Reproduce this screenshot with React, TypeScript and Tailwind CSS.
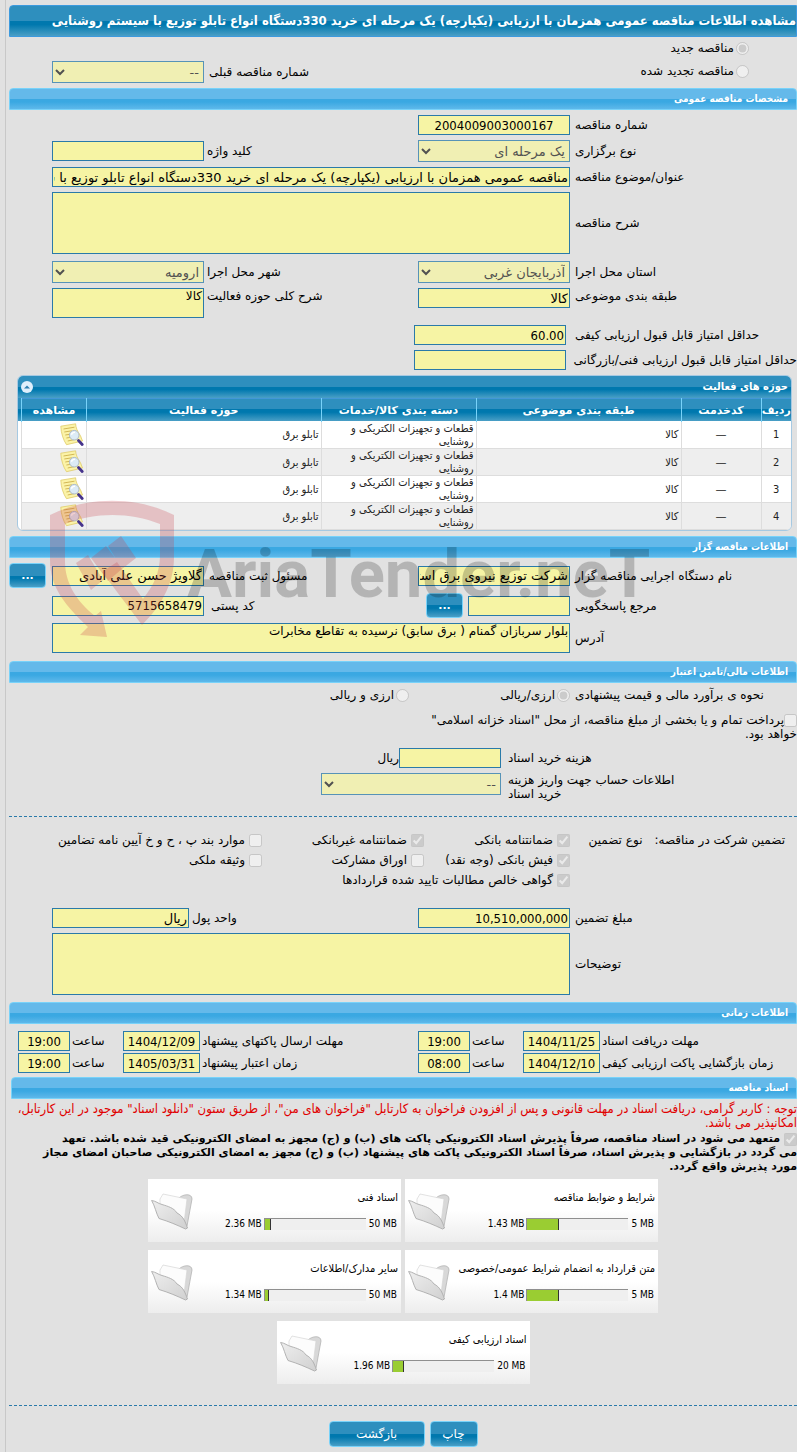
import React from "react";

const FIELD =
  "block h-5 w-full min-w-0 rounded-none border border-[#2a7aa9] bg-[#f6f4a4] px-px text-[13px] leading-4 text-black outline-none";
const DIGITS = "font-['DejaVu_Sans_Condensed','DejaVu_Sans',sans-serif]";
const AREA =
  "block w-full resize-none rounded-none border border-[#2a7aa9] bg-[#f6f4a4] px-px text-xs leading-[14px] text-black outline-none";
const PAIR =
  "grid grid-cols-[minmax(0,227fr)_minmax(0,152fr)_minmax(0,214fr)_minmax(0,152fr)_minmax(0,43fr)] items-center";
const BLUE =
  "bg-[linear-gradient(#2e8fbe_0%,#2e8fbe_50%,#0078ae_50%,#0078ae_62%,#4a9fc6_100%)]";
const CHECK = "m-0 size-[13px] shrink-0";

function Section({ title, inset = false }: { title: string; inset?: boolean }) {
  return (
    <h2
      className={`flex h-[22px] items-center rounded-t border border-[#78d2f9] bg-[linear-gradient(#64b9ea_0%,#64b9ea_50%,#3aa8e2_50%,#3aa8e2_65%,#5eb8ea_100%)] pr-2 text-[10px] font-bold text-white ${DIGITS} ${
        inset ? "ml-[2px]" : ""
      }`}
    >
      {title}
    </h2>
  );
}

function Label({
  id,
  text,
  className = "pl-[3px]",
}: {
  id: string;
  text: React.ReactNode;
  className?: string;
}) {
  return (
    <label htmlFor={id} className={`block whitespace-nowrap text-left leading-4 ${className}`}>
      {text}
    </label>
  );
}

function Text({ id, value = "", className = "" }: { id: string; value?: string; className?: string }) {
  const numeric = /^[\d.,:/]+$/.test(value);
  return (
    <input
      id={id}
      type="text"
      readOnly
      value={value}
      className={`${FIELD} ${numeric ? DIGITS : ""} ${className}`}
    />
  );
}

function Drop({ id, value }: { id: string; value: string }) {
  return (
    <select
      id={id}
      disabled
      className="block h-[22px] w-full rounded-none border border-[#2a7aa9] bg-[#f6f4a4] text-[13px] text-[#222] opacity-75"
    >
      <option>{value}</option>
    </select>
  );
}

function Dots({ label }: { label: string }) {
  return (
    <button
      type="button"
      aria-label={label}
      className={`flex h-[25px] w-[37px] shrink-0 items-center justify-center rounded border border-[#78d2f9] text-[11px] font-bold text-white ${BLUE}`}
    >
      ...
    </button>
  );
}

function Option({
  id,
  text,
  type = "checkbox",
  checked = false,
}: {
  id: string;
  text: string;
  type?: "checkbox" | "radio";
  checked?: boolean;
}) {
  return (
    <div className={`flex items-center whitespace-nowrap ${type === "radio" ? "gap-[2px]" : "gap-1"}`}>
      <input id={id} type={type} disabled defaultChecked={checked} className={CHECK} />
      <label htmlFor={id}>{text}</label>
    </div>
  );
}

function NoteIcon() {
  return (
    <svg viewBox="0 0 24 24" className="size-6" aria-hidden="true">
      <path d="M.8 3.2 15.6.8c.2 4 1.800 7.400 4.900 12l2 5.200-16 3.700C3.300 17 1 10 .8 3.200Z" fill="#fbf3a8" stroke="#e0cc6a" strokeWidth=".8" />
      <path d="m3.500 6 11-1.800M4.300 9l7.500-1.200M5.300 12l5-.8M6.400 15l5-.8M7.700 18l7-1.500" stroke="#cdb04c" strokeWidth=".9" fill="none" />
      <path d="m18.500 17.500 3.700 4" stroke="#46348c" strokeWidth="2.800" strokeLinecap="round" />
      <circle cx="14.200" cy="12.200" r="4.800" fill="#dcebf6" stroke="#aebccb" strokeWidth="1" />
      <path d="M11.400 11.700c.5-1.900 2-2.500 3.600-2.300" stroke="#fff" strokeWidth="1.400" fill="none" />
    </svg>
  );
}

function FolderIcon() {
  return (
    <svg viewBox="0 0 42 38" className="h-[38px] w-[42px]" aria-hidden="true">
      <defs>
        <linearGradient id="front" x1="0" y1="0" x2="1" y2="1">
          <stop offset="0" stopColor="#eeeeee" />
          <stop offset="1" stopColor="#d0d0d0" />
        </linearGradient>
      </defs>
      <path d="M28 6c4-4 13-5 13 1l-5 27-2 2-8-10Z" fill="#d8d8d8" stroke="#b4b4b4" strokeWidth=".8" />
      <path d="M9 14V7l3-5 24 5-3 24L9 22Z" fill="#fcfcfc" stroke="#d6d6d6" strokeWidth=".7" />
      <path
        d="M.6 8.500C5 9 7 11.500 11 12.500c6 1.800 12 3.500 15 8.500 6 3 8 8 10.500 15l-2 1C26 33 18 29.500 8 26.500 5 21 4 14 .6 8.500Z"
        fill="url(#front)"
        stroke="#ababab"
        strokeWidth=".9"
      />
    </svg>
  );
}

function DocCard({ title, used, total, share }: { title: string; used: string; total: string; share: number }) {
  return (
    <div
      dir="ltr"
      className={`flex h-[63px] w-[253px] items-center bg-[linear-gradient(#fff_0%,#fff_50%,#ededed_100%)] px-[3px] leading-[14px] ${DIGITS}`}
    >
      <FolderIcon />
      <div className="flex flex-1 flex-col gap-3">
        <div dir="rtl" className="text-[11px]">
          {title}
        </div>
        <div className="flex items-center justify-end gap-[2px] pr-px text-[10px]">
          <span>{used}</span>
          <div className="h-3 w-[102px] border-t border-l border-[#8f8f8f] bg-[#efefef]">
            <div className="h-full border-r border-[#333] bg-[#9acd32]" style={{ width: `${share}%` }} />
          </div>
          <span className="pl-px">{total}</span>
        </div>
      </div>
    </div>
  );
}

function Watermark() {
  return (
    <div aria-hidden="true" className="pointer-events-none absolute top-[125px] left-[41px] flex items-start" dir="ltr">
      <svg viewBox="50 80 125 140" className="h-[140px] w-[125px]" fill="#c83c46" fillOpacity=".25">
        <path d="M50 95C88 76 136 76 174 95v42c0 28-14 50-32 68l-40-53 15-10 26 37c11-14 17-27 17-44v-31c-30-12-65-12-95 0v38c0 21 12 40 30 54l6-5 6 26-27-2 8-8C66 186 50 168 50 140Z" />
        <path d="m76 143 12-8 15 25-12 10ZM91 138l15-12 17 22-15 13ZM108 126l13-10 15 22-14 11Z" />
      </svg>
      <span className="pt-9 pl-3 font-['Roboto',sans-serif] text-[67px] leading-[76px] font-bold text-black/20">
        AriaTender.neT
      </span>
    </div>
  );
}

const COLUMNS = ["ردیف", "کدخدمت", "طبقه بندی موضوعی", "دسته بندی کالا/خدمات", "حوزه فعالیت", "مشاهده"];

function ActivityTable() {
  const td = "border-b border-l border-[#ddd] px-[2px]";
  return (
    <div className="mr-[5px] ml-2 overflow-hidden rounded-md border border-[#a6c9e2] bg-white">
      <div className={`flex h-[22px] items-center justify-between px-[3px] text-[11px] font-bold text-white ${DIGITS} ${BLUE}`}>
        <span>حوزه های فعالیت</span>
        <button type="button" aria-label="بستن جدول" className="flex size-3 items-center justify-center rounded-full bg-[#dfeffc]">
          <svg viewBox="0 0 12 12" className="size-3">
            <path d="M3 7.500 6 4.500l3 3Z" fill="#2e7fb0" />
          </svg>
        </button>
      </div>
      <div className={`bg-[length:100%_23px] bg-no-repeat pl-[3px] ${BLUE}`}>
        <table className="w-full table-fixed border-collapse text-[11px] leading-[13px] text-[#222]">
          <colgroup>
            <col className="w-[30px]" />
            <col className="w-20" />
            <col className="w-[205px]" />
            <col className="w-[155px]" />
            <col />
            <col className="w-[65px]" />
          </colgroup>
          <thead>
            <tr className="h-[23px] text-white">
              {COLUMNS.map((c) => (
                <th key={c} className="border-t border-l border-t-[#4297d7] border-l-[#78d2f9] p-0 text-center font-bold whitespace-nowrap">
                  {c}
                </th>
              ))}
            </tr>
          </thead>
          <tbody className={DIGITS}>
            {[1, 2, 3, 4].map((n) => (
              <tr key={n} className="h-[27px] odd:bg-white even:bg-[#eee]">
                <td className={`${td} text-center`}>{n}</td>
                <td className={`${td} text-center font-['DejaVu_Sans']`}>—</td>
                <td className={td}>کالا</td>
                <td className={td}>
                  قطعات و تجهیزات الکتریکی و
                  <br />
                  روشنایی
                </td>
                <td className={td}>تابلو برق</td>
                <td className={td}>
                  <NoteIcon />
                </td>
              </tr>
            ))}
          </tbody>
        </table>
      </div>
    </div>
  );
}

const TIMES = [
  ["مهلت دریافت اسناد", "1404/11/25", "19:00", "مهلت ارسال پاکتهای پیشنهاد", "1404/12/09", "19:00"],
  ["زمان بازگشایی پاکت ارزیابی کیفی", "1404/12/10", "08:00", "زمان اعتبار پیشنهاد", "1405/03/31", "19:00"],
];

const DOCS = [
  { title: "شرایط و ضوابط مناقصه", used: "1.43 MB", total: "5 MB", share: 31 },
  { title: "اسناد فنی", used: "2.36 MB", total: "50 MB", share: 6 },
  { title: "متن قرارداد به انضمام شرایط عمومی/خصوصی", used: "1.4 MB", total: "5 MB", share: 31 },
  { title: "سایر مدارک/اطلاعات", used: "1.34 MB", total: "50 MB", share: 4 },
  { title: "اسناد ارزیابی کیفی", used: "1.96 MB", total: "20 MB", share: 11 },
];

const SUBJECT = "مناقصه عمومی همزمان با ارزیابی (یکپارچه) یک مرحله ای خرید 330دستگاه انواع تابلو توزیع با سیستم روشنایی";

export default function App() {
  return (
    <div
      dir="rtl"
      className="overflow-hidden bg-[#e1e1e1] pl-[5px] font-['DejaVu_Sans',sans-serif] text-xs leading-[14px] text-black"
    >
      <main className="border-l border-[#c8c8c8] pt-[5px] pb-[5px] pl-[3px]">
        <h1 className={`flex h-8 items-center rounded-tl border border-[#3c9ade] text-[13px] font-bold whitespace-nowrap text-white ${DIGITS} ${BLUE}`}>
          مشاهده اطلاعات {SUBJECT}
        </h1>

        <div className="grid grid-cols-[minmax(0,379fr)_minmax(0,214fr)_minmax(0,152fr)_minmax(0,43fr)] items-end pt-1 pb-[5px]">
          <div className="flex flex-col gap-[9px] pr-12 pb-[5px]">
            <Option id="new" type="radio" text="مناقصه جدید" checked />
            <Option id="renewed" type="radio" text="مناقصه تجدید شده" />
          </div>
          <Label id="prev" text="شماره مناقصه قبلی" className="pb-[3px] pl-[5px]" />
          <Drop id="prev" value="--" />
        </div>

        <Section title="مشخصات مناقصه عمومی" />
        <div className="flex flex-col gap-[5px] py-[5px]">
          <div className={PAIR}>
            <Label id="number" text="شماره مناقصه" className="pl-[5px]" />
            <Text id="number" value="2004009003000167" className="text-center" />
          </div>
          <div className={PAIR}>
            <Label id="kind" text="نوع برگزاری" className="pl-[5px]" />
            <Drop id="kind" value="یک مرحله ای" />
            <Label id="keyword" text="کلید واژه" />
            <Text id="keyword" />
          </div>
          <div className={PAIR}>
            <Label id="subject" text="عنوان/موضوع مناقصه" className="pl-[5px]" />
            <div className="col-span-3">
              <Text id="subject" value={SUBJECT} />
            </div>
          </div>
          <div className={PAIR}>
            <Label id="desc" text="شرح مناقصه" className="pl-[5px]" />
            <textarea id="desc" readOnly className={`${AREA} col-span-3 h-[62px]`} />
          </div>
          <div className={`${PAIR} pt-[2px]`}>
            <Label id="province" text="استان محل اجرا" className="pl-[5px]" />
            <Drop id="province" value="آذربایجان غربی" />
            <Label id="city" text="شهر محل اجرا" />
            <Drop id="city" value="ارومیه" />
          </div>
          <div className={`${PAIR} items-start`}>
            <Label id="class" text="طبقه بندی موضوعی" className="pl-[5px]" />
            <Text id="class" value="کالا" />
            <Label id="scope" text="شرح کلی حوزه فعالیت" />
            <textarea id="scope" readOnly value="کالا" className={`${AREA} h-[30px]`} />
          </div>
          <div className="grid grid-cols-[minmax(0,231fr)_minmax(0,152fr)_minmax(0,405fr)] items-center gap-y-[5px] pt-[2px]">
            <Label id="quality" text="حداقل امتیاز قابل قبول ارزیابی کیفی" className="pl-[9px]" />
            <Text id="quality" value="60.00" />
            <span />
            <Label id="technical" text="حداقل امتیاز قابل قبول ارزیابی فنی/بازرگانی" className="pl-[9px]" />
            <Text id="technical" />
          </div>
        </div>

        <div className="relative">
          <ActivityTable />
          <div className="pt-[5px]">
            <Section title="اطلاعات مناقصه گزار" />
          </div>
          <div className="flex flex-col gap-[5px] pt-[5px] pb-2">
            <div className={PAIR}>
              <Label id="org" text="نام دستگاه اجرایی مناقصه گزار" className="pl-[5px]" />
              <Text id="org" value="شرکت توزیع نیروی برق استان آذربایجان غربی" />
              <Label id="officer" text="مسئول ثبت مناقصه" className="pl-[5px]" />
              <Text id="officer" value="گلاویژ حسن علی آبادی" />
              <div className="flex justify-end">
                <Dots label="انتخاب مسئول ثبت مناقصه" />
              </div>
            </div>
            <div className={PAIR}>
              <Label id="contact" text="مرجع پاسخگویی" className="pl-[5px]" />
              <div className="flex items-center gap-[5px] pl-2">
                <Text id="contact" className="flex-1" />
                <Dots label="انتخاب مرجع پاسخگویی" />
              </div>
              <Label id="postal" text="کد پستی" className="pl-[7px]" />
              <Text id="postal" value="5715658479" />
            </div>
            <div className={PAIR}>
              <Label id="address" text="آدرس" className="pl-[5px]" />
              <textarea
                id="address"
                readOnly
                value="بلوار سربازان گمنام ( برق سابق) نرسیده به تقاطع مخابرات"
                className={`${AREA} col-span-3 h-[30px]`}
              />
            </div>
          </div>
          <Watermark />
        </div>

        <Section title="اطلاعات مالی/تامین اعتبار" />
        <div className="grid grid-cols-[minmax(0,227fr)_minmax(0,161fr)_minmax(0,400fr)] items-center pt-1">
          <span className="pl-[5px] text-left leading-4 whitespace-nowrap">نحوه ی برآورد مالی و قیمت پیشنهادی</span>
          <Option id="fx-or" type="radio" text="ارزی/ریالی" checked />
          <Option id="fx-and" type="radio" text="ارزی و ریالی" />
        </div>
        <div className="pt-[10px] pb-[7px]">
          <input id="treasury" type="checkbox" disabled className="m-0 size-[13px] align-bottom" />
          <label htmlFor="treasury">
            پرداخت تمام و یا بخشی از مبلغ مناقصه، از محل "اسناد خزانه اسلامی"
            <br />
            خواهد بود.
          </label>
        </div>
        <div className="grid grid-cols-[minmax(0,296fr)_minmax(0,180fr)_minmax(0,312fr)] items-start gap-y-[5px] pb-[15px]">
          <Label id="cost" text="هزینه خرید اسناد" className="pt-[2px] pl-[7px]" />
          <div className="flex items-center">
            <Text id="cost" className="max-w-[102px]" />
            <span>ریال</span>
          </div>
          <span />
          <label htmlFor="account" className="pl-[7px] text-left whitespace-nowrap">
            <span className="inline-block text-right">
              اطلاعات حساب جهت واریز هزینه
              <br />
              <span className="block text-left">خرید اسناد</span>
            </span>
          </label>
          <Drop id="account" value="--" />
        </div>

        <div className="grid grid-cols-[minmax(0,227fr)_minmax(0,146fr)_minmax(0,162fr)_minmax(0,253fr)] border-t border-dashed border-[#2a7aa9] pt-[13px]">
          <div className="flex h-5 items-center gap-3 pr-3 whitespace-nowrap">
            <span>تضمین شرکت در مناقصه:</span>
            <span>نوع تضمین</span>
          </div>
          <div className="flex flex-col gap-[6px] pt-[3px]">
            <Option id="g1" text="ضمانتنامه بانکی" checked />
            <Option id="g2" text="فیش بانکی (وجه نقد)" checked />
            <Option id="g3" text="گواهی خالص مطالبات تایید شده قراردادها" checked />
          </div>
          <div className="flex flex-col gap-[6px] pt-[3px]">
            <Option id="g4" text="ضمانتنامه غیربانکی" checked />
            <Option id="g5" text="اوراق مشارکت" />
          </div>
          <div className="flex flex-col gap-[6px] pt-[3px]">
            <Option id="g6" text="موارد بند پ ، ح و خ آیین نامه تضامین" />
            <Option id="g7" text="وثیقه ملکی" />
          </div>
        </div>

        <div className="flex flex-col gap-[5px] pt-[21px] pb-[7px]">
          <div className="grid grid-cols-[minmax(0,227fr)_minmax(0,152fr)_minmax(0,229fr)_minmax(0,137fr)_minmax(0,43fr)] items-center">
            <Label id="amount" text="مبلغ تضمین" className="pl-[5px]" />
            <Text id="amount" value="10,510,000,000" />
            <Label id="unit" text="واحد پول" />
            <Text id="unit" value="ریال" />
          </div>
          <div className={PAIR}>
            <Label id="notes" text="توضیحات" className="pl-[5px]" />
            <textarea id="notes" readOnly className={`${AREA} col-span-3 h-[62px]`} />
          </div>
        </div>

        <Section title="اطلاعات زمانی" />
        <div className="flex flex-col gap-[2px] pt-[7px] pb-1">
          {TIMES.map(([a, date, hour, b, date2, hour2], i) => (
            <div
              key={a}
              className="grid grid-cols-[minmax(0,197fr)_minmax(0,77fr)_minmax(0,53fr)_minmax(0,52fr)_minmax(0,218fr)_minmax(0,77fr)_minmax(0,53fr)_minmax(0,52fr)_minmax(0,9fr)] items-center"
            >
              <Label id={`d1-${i}`} text={a} className="pl-[2px]" />
              <Text id={`d1-${i}`} value={date} className="text-center" />
              <Label id={`h1-${i}`} text="ساعت" className="pl-[2px]" />
              <Text id={`h1-${i}`} value={hour} className="text-center" />
              <Label id={`d2-${i}`} text={b} className="pl-[2px]" />
              <Text id={`d2-${i}`} value={date2} className="text-center" />
              <Label id={`h2-${i}`} text="ساعت" className="pl-[2px]" />
              <Text id={`h2-${i}`} value={hour2} className="text-center" />
            </div>
          ))}
        </div>

        <Section title="اسناد مناقصه" inset />
        <p className={`pt-[3px] text-[13px] leading-[14px] text-[#e00000] ${DIGITS}`}>
          توجه : کاربر گرامی، دریافت اسناد در مهلت قانونی و پس از افزودن فراخوان به کارتابل "فراخوان های من"، از طریق ستون "دانلود اسناد" موجود در این کارتابل،
          <br />
          امکانپذیر می باشد.
        </p>
        <div className="pt-[2px] pb-[5px] text-[11px] leading-[14px] font-bold">
          <input id="commit" type="checkbox" disabled defaultChecked className="m-0 ml-1 size-[13px] align-bottom" />
          <label htmlFor="commit">
            متعهد می شود در اسناد مناقصه، صرفاً پذیرش اسناد الکترونیکی پاکت های (ب) و (ج) مجهز به امضای الکترونیکی قید شده باشد. تعهد
            <br />
            می گردد در بازگشایی و پذیرش اسناد، صرفاً اسناد الکترونیکی پاکت های پیشنهاد (ب) و (ج) مجهز به امضای الکترونیکی صاحبان امضای مجاز
            <br />
            مورد پذیرش واقع گردد.
          </label>
        </div>

        <div className="mx-auto flex max-w-[512px] flex-wrap justify-center gap-x-1 gap-y-2 pb-[21px]">
          {DOCS.map((d) => (
            <DocCard key={d.title} {...d} />
          ))}
        </div>

        <div className="flex justify-center gap-[5px] border-t border-dashed border-[#2a7aa9] pt-[15px]">
          <button type="button" className={`h-[26px] w-12 rounded border border-[#78d2f9] text-xs text-white ${BLUE}`}>
            چاپ
          </button>
          <button type="button" className={`h-[26px] w-24 rounded border border-[#78d2f9] text-xs text-white ${BLUE}`}>
            بازگشت
          </button>
        </div>
      </main>
    </div>
  );
}
